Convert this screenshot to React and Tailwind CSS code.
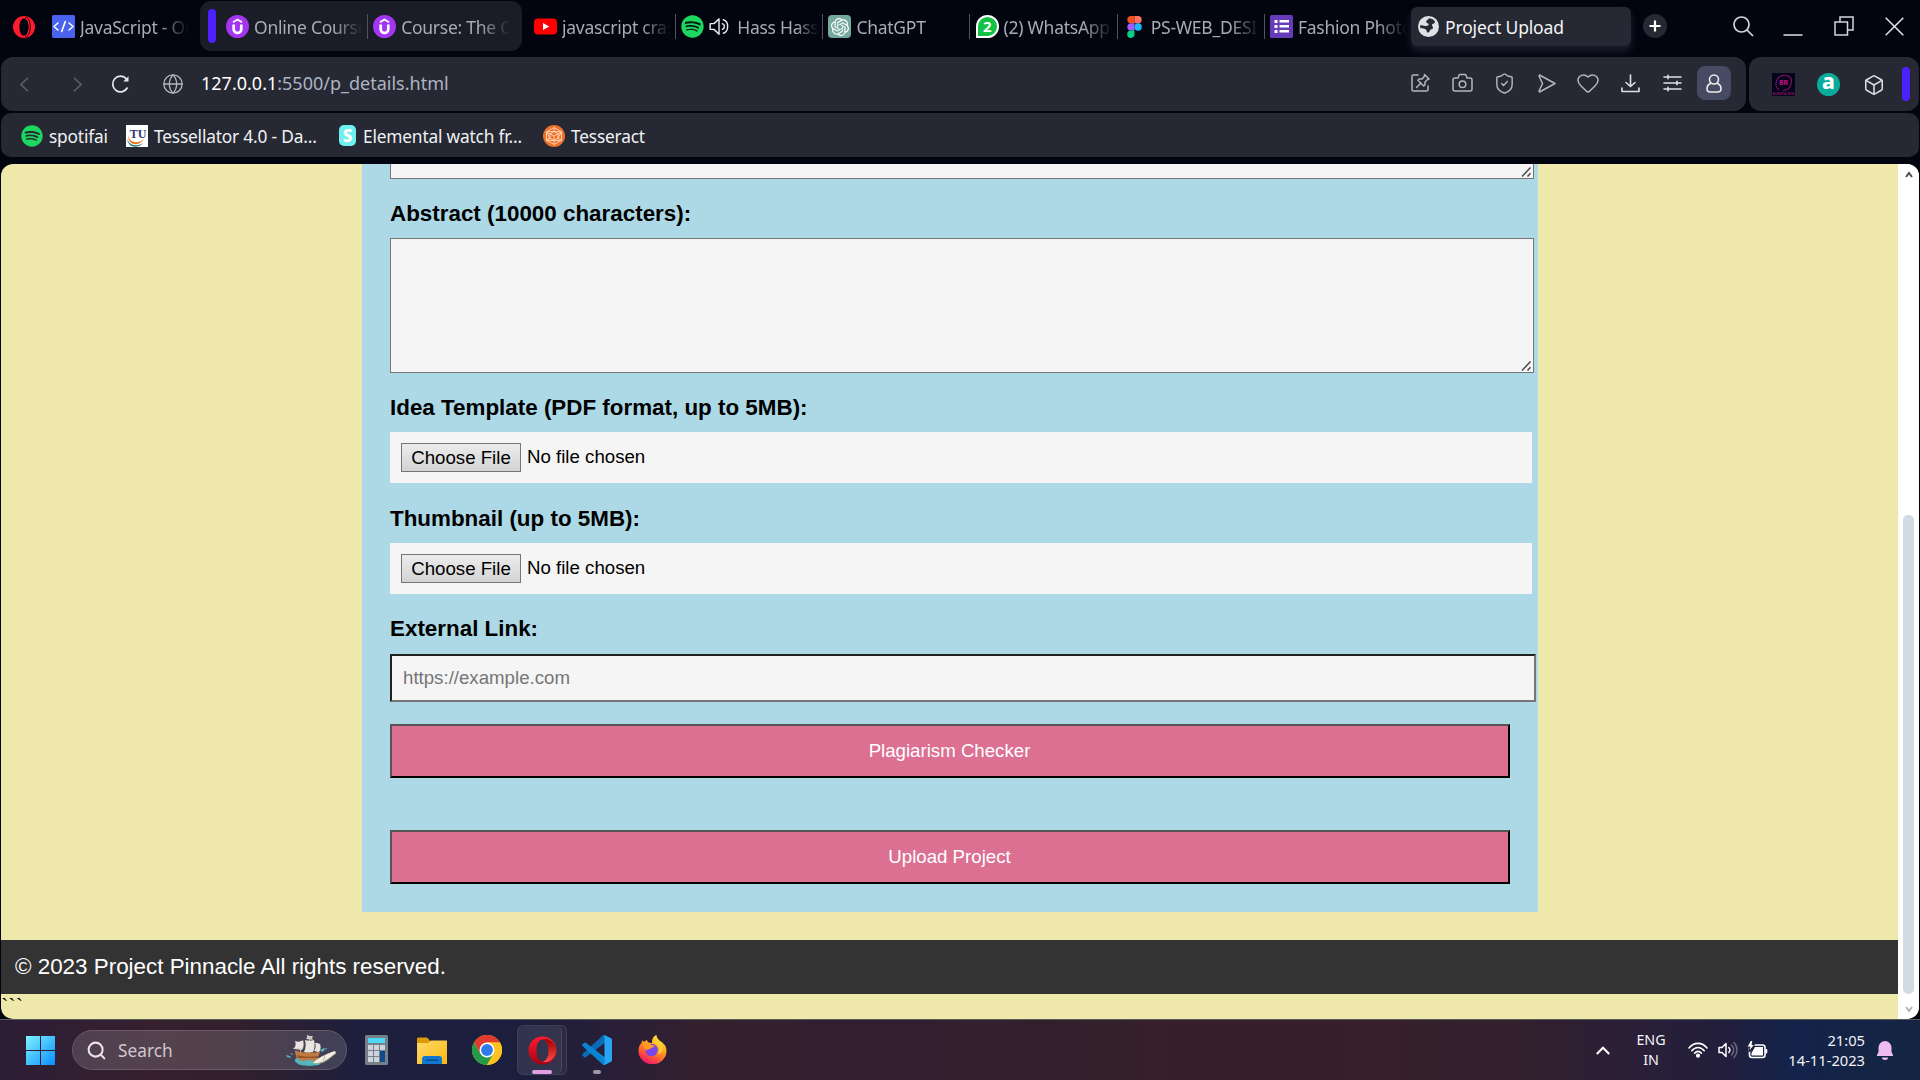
import { Search, Camera, ShieldCheck, Heart, Box, Globe } from "lucide-react";
import { FaSpotify } from "react-icons/fa";
import { SiOpenai } from "react-icons/si";

/* ---------- site icons ---------- */

function OperaOutline() {
  return (
    <svg className="h-[22px] w-[22px] shrink-0" viewBox="0 0 24 24">
      <path fill="#ff1b2d" fillRule="evenodd" d="M12 0a12 12 0 1 0 0 24 12 12 0 0 0 0-24Zm0 2.600c3 0 5 4.200 5 9.400s-2 9.400-5 9.400-5-4.200-5-9.400 2-9.400 5-9.400Z" />
      <path fill="none" stroke="#02040f" strokeWidth="1" d="M13.500 1.600C16 1 18.800 5 18.800 12s-2.800 11-5.300 10.400" />
    </svg>
  );
}

function OperaIcon() {
  return (
    <svg className="h-[29px] w-[29px]" viewBox="0 0 30 30">
      <defs>
        <linearGradient id="opL" x1="0" y1="0" x2="0" y2="1">
          <stop offset="0" stopColor="#ff1b2d" />
          <stop offset="1" stopColor="#a70014" />
        </linearGradient>
        <linearGradient id="opR" x1="0" y1="0" x2="0" y2="1">
          <stop offset="0" stopColor="#9c0000" />
          <stop offset="1" stopColor="#ff4b4b" />
        </linearGradient>
      </defs>
      <path fill="url(#opL)" fillRule="evenodd" d="M15 .5a14.500 14.500 0 1 0 0 29 14.500 14.500 0 0 0 0-29Zm0 3.200c3.800 0 6.300 5 6.300 11.300S18.800 26.300 15 26.300 8.700 21.300 8.700 15 11.200 3.700 15 3.700Z" />
      <path fill="url(#opR)" d="M15 3.700C18 2 22 3.500 24.800 6 31 12 30.500 19.500 24.800 24.200 22 26.500 18 28 15 26.300c3.800 0 6.300-5 6.300-11.300S18.800 3.700 15 3.700Z" />
    </svg>
  );
}

function CodeIcon() {
  return (
    <svg className="h-[23px] w-[23px]" viewBox="0 0 23 23" fill="none" stroke="#fff" strokeWidth="1.600" strokeLinecap="round" strokeLinejoin="round">
      <rect width="23" height="23" rx="1.500" fill="#4b62ee" stroke="none" />
      <path d="M6 8l-4 3.500L6 15M17 8l4 3.500-4 3.500M13.300 6.500l-3.600 10" />
    </svg>
  );
}

function UdemyIcon() {
  return (
    <svg className="h-[23px] w-[23px]" viewBox="0 0 23 23" fill="none" stroke="#fff">
      <circle cx="11.500" cy="11.500" r="11.500" fill="#a435f0" stroke="none" />
      <path strokeWidth="2.700" d="M7.700 9.500v4.700a3.800 3.800 0 0 0 7.600 0V9.500" />
      <path strokeWidth="1.900" d="M7 7.200l4.500-2.700L16 7.200" />
    </svg>
  );
}

function YoutubeIcon() {
  return (
    <svg className="h-[23px] w-[23px]" viewBox="0 0 23 23">
      <rect y="3.500" width="23" height="16" rx="4" fill="#f00" />
      <path fill="#fff" d="M9 8l6.200 3.500L9 15z" />
    </svg>
  );
}

function SpotifyIcon() {
  return (
    <span className="grid h-[23px] w-[23px] place-items-center rounded-full bg-[#06170c]">
      <FaSpotify className="h-[23px] w-[23px] text-[#1ed760]" />
    </span>
  );
}

function ChatGptIcon() {
  return (
    <span className="grid h-[23px] w-[23px] place-items-center rounded-[4px] bg-[#74aa9c]">
      <SiOpenai className="h-[18px] w-[18px] text-white" />
    </span>
  );
}

function WhatsappIcon() {
  return (
    <span className="grid h-[23px] w-[23px] place-items-center rounded-full rounded-bl-[3px] border-2 border-white bg-[#12c143] font-['Open_Sans',sans-serif] text-[15px] leading-none font-bold text-white">
      2
    </span>
  );
}

function FigmaIcon() {
  return (
    <svg className="h-[22px] w-[23px]" viewBox="0 0 23 22">
      <path fill="#f24e1e" d="M11.500 0H8a3.650 3.650 0 0 0 0 7.300h3.500z" />
      <path fill="#ff7262" d="M11.500 0H15a3.650 3.650 0 0 1 0 7.300h-3.500z" />
      <path fill="#a259ff" d="M11.500 7.300H8a3.650 3.650 0 0 0 0 7.300h3.500z" />
      <circle cx="15.100" cy="11" r="3.650" fill="#1abcfe" />
      <path fill="#0acf83" d="M11.500 14.600H8a3.650 3.650 0 1 0 3.500 3.700z" />
    </svg>
  );
}

function FormsIcon() {
  return (
    <svg className="h-[23px] w-[23px]" viewBox="0 0 23 23" fill="#fff">
      <rect width="23" height="23" rx="1.500" fill="#673ab7" />
      <path d="M4.500 5h3v3h-3zM4.500 10h3v3h-3zM4.500 15h3v3h-3zM9.500 5h9.500v2.500H9.500zM9.500 10h9.500v2.500H9.500zM9.500 15h9.500v2.500H9.500z" />
    </svg>
  );
}

function WorldIcon() {
  return (
    <svg className="h-[21px] w-[21px]" viewBox="0 0 24 24">
      <circle cx="12" cy="12" r="12" fill="#dfe1e5" />
      <path fill="#262933" d="M12.500 2.600c-1 2.200-3.500 2-3 4.400.3 1.500 2.500.6 2.700 2.500.2 1.700-1.600 2-3.700 1.900-2.600-.1-4.200-.9-5.900-.8-.2 1-.2 2 0 3 2.400.4 5.400.7 6.600 2 1.200 1.200.3 2.600 1.500 3.200 1.600.7 2.600-.8 3-2.400.3-1.400 3.300-.9 3.500-3 .1-1.600-1.500-1.800-1.300-3.200.2-1.300 2.300-.9 3.200-2.400.4-.8.300-1.500-.1-2.200-1.600-2-3.800-3-6.500-3Z" />
    </svg>
  );
}

function SpeakerIcon() {
  return (
    <svg className="mr-[7px] h-[21px] w-[21px] shrink-0" viewBox="0 0 22 22" fill="none" stroke="#e8e8ee" strokeWidth="1.500" strokeLinejoin="round" strokeLinecap="round">
      <path d="M1.200 8v6h4l5.300 5V3L5.200 8zM15 4c6 1.500 6 12.500 0 14" />
      <path d="M14 8c2.800 1 2.800 5 0 6" />
    </svg>
  );
}

/* ---------- tab strip ---------- */

function Tab({ icon, title, line = true, extra }) {
  return (
    <div className="flex h-[38px] w-[147.200px] shrink-0 items-center">
      <span className="grid w-[23px] shrink-0 place-items-center">{icon}</span>
      <div className="ml-[5px] flex w-[110px] shrink-0 items-center overflow-hidden">
        {extra}
        <span className="w-full overflow-hidden pt-[2px] whitespace-nowrap [mask-image:linear-gradient(to_right,black_72%,transparent_99%)]">{title}</span>
      </div>
      {line && <span className="ml-[3px] h-[25px] w-px bg-[#51535e]" />}
    </div>
  );
}

function TabStrip() {
  return (
    <div className="flex h-[57px] shrink-0 items-start text-[17.500px] tracking-[-0.260px] text-[#a9abb3]">
      <div className="flex h-[53px] items-center pl-[13px]">
        <OperaOutline />
      </div>
      <div className="ml-[17px] flex h-[53px] w-[147px] items-center">
        <Tab icon={<CodeIcon />} title="JavaScript - On" line={false} />
      </div>
      <div className="mt-px ml-px flex h-[50px] w-[322px] shrink-0 items-center rounded-[11px] bg-[#1a1c28] pl-[8px]">
        <span className="mr-[10px] h-[34px] w-[8px] shrink-0 rounded-full bg-[#4d20ff]" />
        <Tab icon={<UdemyIcon />} title="Online Course" />
        <Tab icon={<UdemyIcon />} title="Course: The C" line={false} />
      </div>
      <div className="ml-[12px] flex h-[53px] w-[877px] shrink-0 items-center">
        <Tab icon={<YoutubeIcon />} title="javascript cras" />
        <Tab icon={<SpotifyIcon />} title="Hass Hass" extra={<SpeakerIcon />} />
        <Tab icon={<ChatGptIcon />} title="ChatGPT" />
        <Tab icon={<WhatsappIcon />} title="(2) WhatsApp" />
        <Tab icon={<FigmaIcon />} title="PS-WEB_DESI" />
        <Tab icon={<FormsIcon />} title="Fashion Photo" line={false} />
      </div>
      <div className="mt-[7px] flex h-[39px] w-[220px] shrink-0 items-center gap-[6px] rounded-[6px] bg-[#262933] pl-[7px] text-[#f3f3f5] shadow-[0_5px_9px_rgba(80,84,105,0.350)]">
        <WorldIcon />
        <span className="pt-[2px] tracking-[-0.150px]">Project Upload</span>
      </div>
      <div className="flex h-[52px] items-center">
        <span className="ml-[12px] grid h-[24px] w-[24px] place-items-center rounded-full bg-[#262933]">
          <svg className="h-[12px] w-[12px]" viewBox="0 0 12 12" stroke="#fff" strokeWidth="2.200">
            <path d="M6 .5v11M.5 6h11" />
          </svg>
        </span>
        <svg className="ml-[66px] h-[21px] w-[21px]" viewBox="0 0 21 21" fill="none" stroke="#d4d5da" strokeWidth="1.700">
          <circle cx="8.500" cy="8.500" r="7.500" />
          <path d="M14 14l6 6" />
        </svg>
        <svg className="ml-[29px] h-[21px] w-[20px]" viewBox="0 0 20 21" stroke="#d4d5da" strokeWidth="1.600">
          <path d="M.5 19h19" />
        </svg>
        <svg className="ml-[31px] h-[20px] w-[20px]" viewBox="0 0 20 20" fill="none" stroke="#d4d5da" strokeWidth="1.500">
          <path d="M1 6h12.500v13H1zM6 6V1h13v13h-5.500" />
        </svg>
        <svg className="ml-[31px] h-[19px] w-[19px]" viewBox="0 0 19 19" stroke="#e4e5ea" strokeWidth="1.500">
          <path d="M.7.700l17.600 17.600M18.300.700L.7 18.300" />
        </svg>
      </div>
    </div>
  );
}

/* ---------- address bar ---------- */

function Slot({ children }) {
  return <span className="grid w-[42px] shrink-0 place-items-center">{children}</span>;
}

const line = { fill: "none", stroke: "#b4b6bf", strokeWidth: 1.5, strokeLinecap: "round", strokeLinejoin: "round" };

function AddressBar() {
  return (
    <div className="flex h-[54px] shrink-0 gap-[3px] px-px text-[#b4b6bf]">
      <div className="flex w-[1745px] items-center rounded-[12px] bg-[#262933] pl-[19px]">
        <svg className="h-[15px] w-[9px]" viewBox="0 0 9 15" fill="none" stroke="#5d5f6a" strokeWidth="1.600">
          <path d="M8 .7L1 7.500l7 6.800" />
        </svg>
        <svg className="ml-[44px] h-[15px] w-[9px]" viewBox="0 0 9 15" fill="none" stroke="#5d5f6a" strokeWidth="1.600">
          <path d="M1 .7l7 6.800-7 6.800" />
        </svg>
        <svg className="ml-[29px] h-[19px] w-[19px]" viewBox="0 0 19 19" fill="none" stroke="#e8e9ee" strokeWidth="1.700">
          <path d="M16.500 12.500A7.800 7.800 0 1 1 15.500 4" />
          <path d="M12.300 6.500h5.200V1.300z" fill="#e8e9ee" stroke="none" />
        </svg>
        <Globe className="ml-[32px] h-[22px] w-[22px]" strokeWidth={1.400} />
        <span className="ml-[17px] pb-px text-[18px] text-[#aeb4c2]">
          <span className="text-white">127.0.0.1</span>:5500/p_details.html
        </span>
        <div className="ml-auto flex items-center pr-[15px] pb-[2px]">
          <Slot>
            <svg className="ml-[3px] h-[20px] w-[20px]" viewBox="0 0 20 20" {...line}>
              <path d="M7 2H2.500A1.500 1.500 0 0 0 1 3.500v13A1.500 1.500 0 0 0 2.500 18h13a1.500 1.500 0 0 0 1.500-1.500V13" />
              <path d="M13.500 1.500l4.500 4.500-1.500.5-2.500 2.500v2.800L12.700 13 7 7.300 8.300 6H11l2.300-2.500zM9.500 10.500L5.500 14.500" />
            </svg>
          </Slot>
          <Slot>
            <svg className="ml-[2px] h-[20px] w-[21px]" viewBox="0 0 21 20" {...line}>
              <path d="M6 5l1-2.700Q7.300 1.500 8 1.500h5q.7 0 1 .8L15 5h3q2 0 2 2v9q0 2-2 2H3q-2 0-2-2V7q0-2 2-2z" />
              <circle cx="10.500" cy="11.300" r="3.300" />
            </svg>
          </Slot>
          <Slot><ShieldCheck className="ml-[2px] h-[23px] w-[23px]" strokeWidth={1.500} /></Slot>
          <Slot>
            <svg className="ml-[4px] h-[19px] w-[18px]" viewBox="0 0 18 19" {...line}>
              <path d="M1.500 1l15.500 8.500L1.500 18 1 17l3.500-7.500L1 2z" />
            </svg>
          </Slot>
          <Slot><Heart className="ml-[2px] h-[24px] w-[24px]" strokeWidth={1.500} /></Slot>
          <Slot>
            <svg className="ml-[2px] h-[19px] w-[19px]" viewBox="0 0 19 19" {...line} stroke="#dfe0e6" strokeWidth="1.600">
              <path d="M9.500 1v11M5 8.500L9.500 12.500 14 8.500M1 14v3.500h17V14" />
            </svg>
          </Slot>
          <Slot>
            <svg className="ml-[2px] h-[18px] w-[19px]" viewBox="0 0 19 18" {...line} stroke="#dfe0e6" strokeWidth="1.600">
              <path d="M1 3h17M1 9h17M1 15h17M5 1.300v3.400M14 7.300v3.400M5 13.300v3.400" />
            </svg>
          </Slot>
          <span className="ml-[5px] grid h-[34px] w-[34px] place-items-center rounded-[8px] bg-[#474a63]">
            <svg className="h-[19px] w-[16px]" viewBox="0 0 16 19" {...line} stroke="#eceded" strokeWidth="1.600">
              <circle cx="8" cy="5.500" r="4.500" />
              <path d="M4.500 9.500C2 10.500 1 12.500 1 15c0 2.300 1.500 3 3.500 3h7c2 0 3.500-.7 3.500-3 0-2.500-1-4.500-3.500-5.500" />
            </svg>
          </span>
        </div>
      </div>
      <div className="flex flex-1 items-center rounded-[12px] bg-[#262933] pl-[23px]">
        <svg className="h-[23px] w-[23px]" viewBox="0 0 23 23">
          <rect width="23" height="23" fill="#02041a" />
          <path d="M7 17c-3-2-4-6-2-10s7-6 11-4 4 5 3 8-1 4-3 5-4 1-5 2" fill="none" stroke="#8b0f66" strokeWidth="1.100" />
          <text x="11.500" y="12" fontSize="7" fontWeight="bold" textAnchor="middle" fill="#c4128a">BR</text>
          <text x="11.500" y="21.500" fontSize="3.200" fontWeight="bold" textAnchor="middle" fill="#8b0f66">BLEND &amp; RUN</text>
        </svg>
        <span className="ml-[22px] grid h-[23px] w-[23px] place-items-center rounded-full bg-[#0bab9b] text-[21px] leading-none font-extrabold text-white">
          <span className="-mt-[5px]">a</span>
        </span>
        <Box className="mt-[2px] ml-[23px] h-[22px] w-[22px] text-[#dcdde2]" strokeWidth={1.700} />
        <span className="mr-[9px] ml-auto h-[34px] w-[8px] rounded-full bg-[#4d20ff]" />
      </div>
    </div>
  );
}

function BookmarkBar() {
  return (
    <div className="mx-px mt-[2px] flex h-[44px] shrink-0 items-center rounded-[10px] bg-[#262933] pt-px pl-[20px] text-[17.300px] tracking-[-0.170px] whitespace-nowrap text-[#f0f1f4]">
      <FaSpotify className="h-[22px] w-[22px] text-[#1ed760]" />
      <span className="ml-[6px] w-[77px] pt-[3px]">spotifai</span>
      <svg className="h-[22px] w-[22px]" viewBox="0 0 22 22">
        <rect width="22" height="22" fill="#fff" />
        <path d="M2 10c1 7 9 10 16 4-5 8-16 7-16-4Z" fill="#f07820" />
        <path d="M1 14c3 7 10 8 16 4-4 5-14 6-16-4Z" fill="#156e74" />
        <text x="12" y="13" fontSize="12" fontWeight="bold" fontFamily="Liberation Serif, serif" textAnchor="middle" fill="#35357a">TU</text>
      </svg>
      <span className="ml-[6px] w-[185px] pt-[3px]">Tessellator 4.0 - Da...</span>
      <span className="grid h-[21px] w-[17px] place-items-center rounded-[5px] bg-[#6ff0ee] text-[17px] leading-none font-extrabold text-white">S</span>
      <span className="ml-[7px] w-[180px] pt-[3px]">Elemental watch fr...</span>
      <svg className="h-[22px] w-[22px]" viewBox="0 0 22 22" fill="none" stroke="#ffd2b0" strokeWidth="1">
        <circle cx="11" cy="11" r="11" fill="#f0702a" stroke="none" />
        <path d="M11 2.500l7.500 4.300v8.500L11 19.500l-7.500-4.200V6.800zM11 6.500l4 2.300v4.400l-4 2.300-4-2.300V8.800zM11 2.500v4M18.500 6.800L15 8.800M18.500 15.300l-3.500-2M11 19.500v-4M3.500 15.300l3.500-2M3.500 6.800l3.500 2M7 8.800l4 2.200 4-2.200M11 11v4.500M3.500 6.800L11 6.500l7.500.3M3.500 15.300l7.500.2 7.500-.2M3.500 6.800L7 13.200l-3.500 2.100M18.500 6.800L15 13.200" />
      </svg>
      <span className="ml-[6px] pt-[3px]">Tesseract</span>
    </div>
  );
}

/* ---------- page ---------- */

function ResizeHandle() {
  return (
    <svg className="h-[13px] w-[13px]" viewBox="0 0 13 13" stroke="#4a4a4a" strokeWidth="1.500">
      <path d="M2 11.500l8.500-9M7.500 11.500l3-3.300" />
    </svg>
  );
}

function Label({ children }) {
  return <div className="text-[22.400px] leading-[26px] font-bold whitespace-nowrap text-black">{children}</div>;
}

function FileField() {
  return (
    <div className="flex h-[51px] w-[1142px] items-center bg-[#f5f5f5] pl-[11px] text-[18.670px] text-black">
      <span className="flex h-[29px] w-[120px] items-center justify-center border border-[#767676] bg-linear-to-b from-[#ececec] to-[#d3d3d3]">Choose File</span>
      <span className="ml-[6px] pb-[2px]">No file chosen</span>
    </div>
  );
}

function PinkButton({ children }) {
  return (
    <div className="flex h-[54px] w-[1120px] items-center justify-center border-2 border-t-[#555] border-r-black border-b-black border-l-[#555] bg-[#db7093] pr-px text-[18.670px] text-white">
      {children}
    </div>
  );
}

function Page() {
  return (
    <div className="mx-px mt-[7px] flex h-[855px] shrink-0 overflow-hidden rounded-[12px] bg-[#eee8aa] font-['Liberation_Sans',Arial,sans-serif]">
      <div className="flex w-[1897px] flex-col">
        <div className="ml-[361px] flex h-[748px] w-[1176px] shrink-0 flex-col bg-[#add8e6] pl-[28px]">
          <div className="flex h-[15px] w-[1144px] shrink-0 items-end justify-end border border-t-0 border-[#767676] bg-[#f5f5f5]"><ResizeHandle /></div>
          <div className="h-[59px] pt-[22px]"><Label>Abstract (10000 characters):</Label></div>
          <div className="flex h-[135px] w-[1144px] items-end justify-end border border-[#767676] bg-[#f5f5f5]"><ResizeHandle /></div>
          <div className="h-[59px] pt-[22px]"><Label>Idea Template (PDF format, up to 5MB):</Label></div>
          <FileField />
          <div className="h-[60px] pt-[23px]"><Label>Thumbnail (up to 5MB):</Label></div>
          <FileField />
          <div className="h-[60px] pt-[22px]"><Label>External Link:</Label></div>
          <div className="flex h-[48px] w-[1146px] items-center border-2 border-t-[#212121] border-r-[#767676] border-b-[#767676] border-l-[#212121] bg-[#f5f5f5] pl-[11px] text-[18.670px] text-[#757575]">
            https://example.com
          </div>
          <div className="mt-[22px]"><PinkButton>Plagiarism Checker</PinkButton></div>
          <div className="mt-[52px]"><PinkButton>Upload Project</PinkButton></div>
        </div>
        <div className="mt-[28px] flex h-[54px] shrink-0 items-center bg-[#333] pl-[14px] text-[22.400px] whitespace-nowrap text-white">
          © 2023 Project Pinnacle All rights reserved.
        </div>
        <div className="pt-px font-['Liberation_Serif',serif] text-[22px] leading-none text-black">```</div>
      </div>
      <div className="flex w-[21px] flex-col items-center bg-white">
        <svg className="mt-[7px] h-[7px] w-[8px] shrink-0" viewBox="0 0 8 7" fill="none" stroke="#505050" strokeWidth="2">
          <path d="M1 6l3-4 3 4" />
        </svg>
        <div className="mt-[337px] h-[479px] w-[11px] shrink-0 rounded-[5px] bg-[#d2dbe3]" />
        <svg className="mt-[12px] h-[7px] w-[8px] shrink-0" viewBox="0 0 8 7" fill="none" stroke="#b5b5b5" strokeWidth="2">
          <path d="M1 1l3 4 3-4" />
        </svg>
      </div>
    </div>
  );
}

/* ---------- taskbar ---------- */

function StartIcon() {
  return (
    <svg className="h-[29px] w-[29px]" viewBox="0 0 29 29">
      <defs>
        <linearGradient id="win" gradientUnits="userSpaceOnUse" x1="0" y1="0" x2="29" y2="29">
          <stop offset="0" stopColor="#7df3ff" />
          <stop offset="1" stopColor="#0a8dff" />
        </linearGradient>
      </defs>
      <path fill="url(#win)" d="M0 0h14v14H0zM15 0h14v14H15zM0 15h14v14H0zM15 15h14v14H15z" />
    </svg>
  );
}

function ShipIcon() {
  return (
    <svg className="h-[31px] w-[51px]" viewBox="0 0 51 31">
      <path fill="#b9b3ad" d="M23 1h1v22h-1zM14 6h1v14h-1zM31 8h1v14h-1z" />
      <path fill="#c07a42" d="M9 15c5 3 14 3 25 2l-4 11H14C11 25 9 20 9 15Z" />
      <path fill="#8f5428" d="M11 20c6 2 14 2 21 1l-1 2H12z" />
      <path fill="#e9e4e0" d="M7 14c3-2 3-5 2-8 3 1 6 1 8-1 1 4 1 7-1 10-3-1-6-1-9-1ZM18 17c2-4 2-8 1-12 3 1 6 1 9 0 1 4 1 8-1 12-3 0-6 1-9 0ZM28 16c2-3 2-6 1-8 2 0 3 0 5 1 1 3 1 5-1 8z" />
      <path fill="#cfc6c0" d="M20 4c1-1 1-2 1-4 2 1 4 1 6 1-1 1-1 3 0 4zM7 14c3-1 6-1 9 0v1c-3-1-6-1-9-1Z" />
      <path fill="#54b5bd" d="M10 23c3 0 4 3 7 3s4-2 7-1 5 2 8 0l4 1-3 4c-5 1-18 2-22-2-2-1-3-3-1-5ZM0 20l4 1 1 2-4-1zM4 18l3 1-1 1zM34 15l4-2 1 2-3 2zM39 13l2 0-1 2z" />
      <path fill="#f1eddf" d="M27 28c4-4 7-6 12-8 3-2 7-3 10-4l1 2c-5 4-9 7-13 9-4 1-7 1-10 1Z" />
      <path fill="none" stroke="#b0a995" strokeWidth=".8" d="M27 28.500c4 0 8 0 11-1.500 4-2 8-6 12-9M38 20c1 2 0 5-1 7" />
    </svg>
  );
}

function CalculatorIcon() {
  return (
    <svg className="h-[30px] w-[23px]" viewBox="0 0 23 30">
      <rect width="23" height="30" rx="1.500" fill="#76808a" />
      <rect x="3" y="3" width="17" height="5" fill="#4cd8f5" />
      <path fill="#ccd3da" d="M3 10h5v5H3zM9 10h5v5H9zM15 10h5v5h-5zM3 16h5v5H3zM9 16h5v5H9zM3 22h5v5H3zM9 22h5v5H9z" />
      <path fill="#0f4a8c" d="M15 16h5v11h-5z" />
    </svg>
  );
}

function FolderIcon() {
  return (
    <svg className="h-[27px] w-[30px]" viewBox="0 0 30 27">
      <defs>
        <linearGradient id="fol" x1="0" y1="0" x2="1" y2="1">
          <stop offset="0" stopColor="#ffd96b" />
          <stop offset="1" stopColor="#fcb90f" />
        </linearGradient>
      </defs>
      <path fill="#dc9a05" d="M0 1.500Q0 .5 1 .5h9l3 3v5H0z" />
      <path fill="url(#fol)" d="M0 6h11l3-2.500h16V27H0z" />
      <path fill="#1277cf" d="M5 27v-5q0-3 3-3h14q3 0 3 3v5z" />
      <path fill="#0a4f96" d="M9 22.500h12v1.500H9z" />
    </svg>
  );
}

function ChromeIcon() {
  return (
    <svg className="h-[30px] w-[30px]" viewBox="0 0 48 48">
      <circle cx="24" cy="24" r="24" fill="#fcc31e" />
      <path fill="#e03b2e" d="M24 12h20.800A24 24 0 0 0 3.200 12l10.400 18L24 24z" />
      <path fill="#259a48" d="M13.600 30L3.200 12A24 24 0 0 0 24 48l10.400-18L24 24z" />
      <path fill="#fcc31e" d="M34.400 30L24 48a24 24 0 0 0 20.800-36H24v12z" />
      <circle cx="24" cy="24" r="12" fill="#fff" />
      <circle cx="24" cy="24" r="9.500" fill="#2f7bea" />
    </svg>
  );
}

function CodeEditorIcon() {
  return (
    <svg className="h-[30px] w-[30px]" viewBox="0 0 100 100">
      <path fill="#0a6cb8" d="M96 11L76 1a6 6 0 0 0-7 1L2 63a4 4 0 0 0 0 6l5.500 5a4 4 0 0 0 5 .2L93 13z" />
      <path fill="#0a84d0" d="M96 89L76 99a6 6 0 0 1-7-1L2 37a4 4 0 0 1 0-6l5.500-5a4 4 0 0 1 5-.2L93 87z" />
      <path fill="#27a4f2" d="M76 99a6 6 0 0 1-7-1c2.200 2.200 6 .7 6-2.500V4.400C75 1.300 71.200-.3 69 2a6 6 0 0 1 7-1l20.600 10A6 6 0 0 1 100 16.500v67a6 6 0 0 1-3.400 5.500z" />
    </svg>
  );
}

function FirefoxIcon() {
  return (
    <svg className="h-[29px] w-[29px]" viewBox="0 0 29 29">
      <defs>
        <linearGradient id="ff" x1=".8" y1="0" x2=".3" y2="1">
          <stop offset="0" stopColor="#fff04a" />
          <stop offset=".4" stopColor="#ffa51e" />
          <stop offset=".7" stopColor="#ff5a35" />
          <stop offset="1" stopColor="#ee1070" />
        </linearGradient>
      </defs>
      <path fill="url(#ff)" d="M14 8c0-4 1-6.500 4.500-8 .3 4 3 5 5 7 1 0 1.500 1 2 2 1 0 3 3 3 7a14 13.300 0 0 1-28 0c0-4 1-6 3-8 0-1 .5-2 1.500-3 0 1 .5 1.500 1 2 1.500-1 2-2 3-2 0 2 1.500 3 5 3Z" />
      <circle cx="13.500" cy="15" r="6.300" fill="#7b46e8" />
      <path fill="#ff9a22" d="M5 8.500c4-1 7 0 8.500 1.500 2 .2 3 .7 3 1.500-1 1-3 1-4 2-1 1-3 .5-4 2-2-2-3.500-4-3.500-7Z" />
      <path fill="#ffce2e" d="M15 8c3 0 6 2 6 7 0 2-.5 3-1.500 4.500C26 18 26 11 22 7l-4-5c-1 2 1 4-3 6Z" />
    </svg>
  );
}

function Taskbar() {
  return (
    <div className="flex h-[61px] shrink-0 items-center border-t border-[#5b5a5c] bg-[linear-gradient(to_right,#2c1d36_0px,#36202e_150px,#33202c_230px,#1d1f3d_360px,#1b1f3d_520px,#2b1f36_630px,#33202c_700px,#331e30_860px,#33202b_1100px,#371f2a_1220px,#33202c_1500px,#2a1f38_1640px,#211f3c_1730px,#13234a_1790px,#152542_1920px)]">
      <div className="ml-[26px]"><StartIcon /></div>
      <div className="ml-[17px] flex h-[40px] w-[275px] items-center rounded-full border border-[#695866] bg-white/15 pl-[13px]">
        <Search className="h-[21px] w-[21px] text-[#e9e4ea]" strokeWidth={2.300} />
        <span className="ml-[11px] flex-1 pt-px text-[17.300px] text-[#cfc7cf]">Search</span>
        <span className="mr-[9px]"><ShipIcon /></span>
      </div>
      <div className="ml-[18px]"><CalculatorIcon /></div>
      <div className="ml-[29px]"><FolderIcon /></div>
      <div className="ml-[25px]"><ChromeIcon /></div>
      <div className="ml-[15px] flex h-[50px] w-[50px] rounded-[6px] border border-white/10 bg-white/5">
        <div className="flex w-[44px] flex-col items-center rounded-[6px] border-r border-white/10 bg-white/5 pt-[10px] pl-[5px]">
          <OperaIcon />
          <span className="mt-[5px] h-[4px] w-[20px] rounded-full bg-[#df9fe2]" />
        </div>
      </div>
      <div className="ml-[15px] flex h-[50px] flex-col items-center pt-[10px]">
        <CodeEditorIcon />
        <span className="mt-[5px] h-[4px] w-[8px] rounded-full bg-[#9b99a6]" />
      </div>
      <div className="ml-[26px] pb-px"><FirefoxIcon /></div>
      <div className="mr-[27px] ml-auto flex items-center text-[14.700px] leading-[20px] text-[#f4f2f6]">
        <svg className="h-[9px] w-[14px]" viewBox="0 0 14 9" fill="none" stroke="#fff" strokeWidth="2">
          <path d="M.8 8L7 1.700 13.200 8" />
        </svg>
        <div className="ml-[26px] w-[30px] text-center text-[14.300px]">
          <div>ENG</div>
          <div>IN</div>
        </div>
        <svg className="ml-[22px] h-[16px] w-[20px]" viewBox="0 0 20 16" fill="none" stroke="#fff" strokeWidth="1.600" strokeLinecap="round">
          <path d="M1 6c5-6.200 13-6.200 18 0M3.800 8.700c3.500-4.300 8.900-4.300 12.400 0M6.600 11.200c2-2.500 4.800-2.500 6.800 0" />
          <circle cx="10" cy="13.700" r="1.300" fill="#fff" />
        </svg>
        <svg className="ml-[10px] h-[18px] w-[20px]" viewBox="0 0 20 18" fill="none" stroke="#fff" strokeWidth="1.500" strokeLinejoin="round" strokeLinecap="round">
          <path d="M1 6.500v5h3l4 4v-13l-4 4zM10.800 6.500c1.500 1.500 1.500 3.500 0 5" />
          <path stroke="#6f6980" d="M13.500 4c3 3 3 7 0 10M16 1.500c4 4.500 4 10.500 0 15" />
        </svg>
        <svg className="ml-[9px] h-[18px] w-[21px]" viewBox="0 0 21 18">
          <rect x="2.500" y="4" width="15.500" height="12.500" rx="2.500" fill="none" stroke="#fff" strokeWidth="1.600" />
          <path fill="#fff" d="M8 6h8v8.500H4.500V12zM18.500 8h1.500q1 2.300 0 4.500h-1.500z" />
          <path fill="#fff" stroke="#241f3b" strokeWidth="1" d="M3.500-.5l2.500 0-1 4h2.500L2 11l1-5H0z" />
        </svg>
        <div className="w-[97px] text-right">
          <div>21:05</div>
          <div>14-11-2023</div>
        </div>
        <svg className="ml-[12px] h-[19px] w-[16px]" viewBox="0 0 16 19" fill="#efbdf2">
          <path d="M8 0a6.500 6.500 0 0 1 6.500 6.500V11L16 14v1H0v-1l1.500-3V6.500A6.500 6.500 0 0 1 8 0ZM5 16.500h6a3 2.500 0 0 1-6 0Z" />
        </svg>
      </div>
    </div>
  );
}

export default function App() {
  return (
    <div className="flex h-[1080px] w-[1920px] flex-col overflow-hidden bg-[#02040f] font-['Noto_Sans','Open_Sans',sans-serif]">
      <TabStrip />
      <AddressBar />
      <BookmarkBar />
      <Page />
      <Taskbar />
    </div>
  );
}
